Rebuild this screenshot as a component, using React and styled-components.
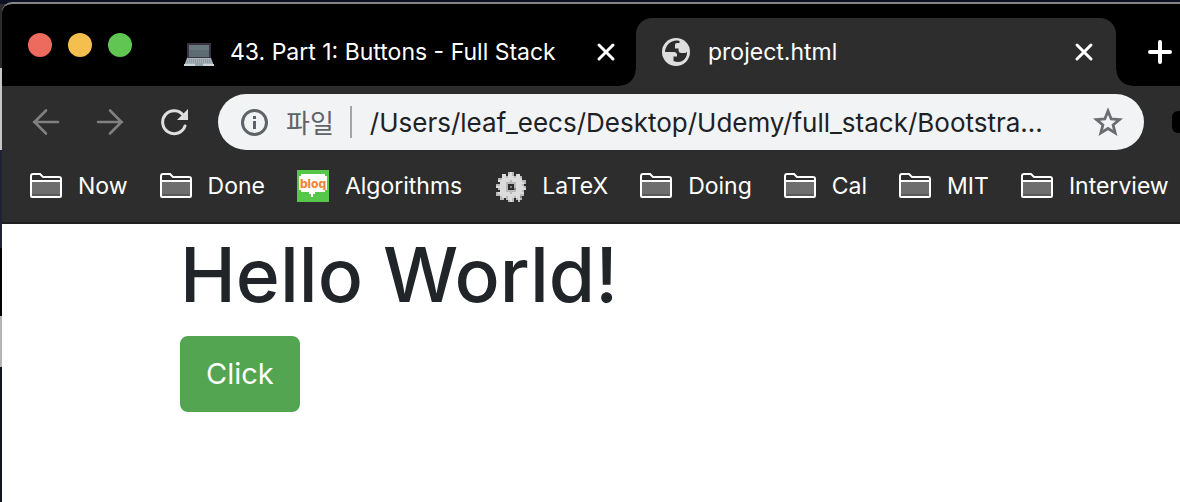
import React from "react";
import styled, { createGlobalStyle } from "styled-components";

const GlobalStyle = createGlobalStyle`
  *, *::before, *::after { box-sizing: border-box; }
  body {
    margin: 0;
    overflow: hidden;
    font-family: Inter, "Liberation Sans", "Noto Sans CJK KR", sans-serif;
  }
`;

const Desktop = styled.div`
  display: flex;
  min-height: 100vh;
  padding: 2px 0 0 2px;
  background: linear-gradient(
    #0c1020 0 4px, #2b2b2b 4px 68px, #c6c6c6 68px 150px, #1d2332 150px 248px,
    #020306 248px 316px, #b4b4b4 316px 367px, #12161c 367px
  );
`;

const Window = styled.div`
  flex: 1;
  min-width: 0;
  display: flex;
  flex-direction: column;
  overflow: hidden;
  background: #fff;
  border-top: 2px solid #858585;
  border-top-left-radius: 10px;
`;

const TabStrip = styled.header`
  display: flex;
  align-items: stretch;
  height: 82px;
  padding: 14px 8px 0 26px;
  background: #000;
`;

const Lights = styled.div`
  display: flex;
  align-items: center;
  gap: 16px;
  padding-bottom: 14px;
  margin-right: 26px;
`;

const Light = styled.button`
  width: 24px;
  height: 24px;
  padding: 0;
  border: 0;
  border-radius: 50%;
  background: ${(p) => p.$color};
`;

const Tab = styled.div`
  position: relative;
  flex: 0 1 480px;
  min-width: 0;
  display: flex;
  align-items: center;
  gap: 16px;
  margin-right: ${(p) => (p.$active ? "0" : "-2px")};
  padding: 0 22px 0 26px;
  border-radius: 16px 16px 0 0;
  background: ${(p) => (p.$active ? "#2d2d2d" : "transparent")};
  color: #fff;

  &::before,
  &::after {
    content: "";
    display: ${(p) => (p.$active ? "block" : "none")};
    position: absolute;
    bottom: 0;
    width: 16px;
    height: 16px;
  }
  &::before {
    right: 100%;
    background: radial-gradient(circle at 0 0, #000 15px, #2d2d2d 16px);
  }
  &::after {
    left: 100%;
    background: radial-gradient(circle at 100% 0, #000 15px, #2d2d2d 16px);
  }
`;

const TabTitle = styled.span`
  flex: 1;
  min-width: 0;
  overflow: hidden;
  white-space: nowrap;
  font-size: 23px;
  line-height: 32px;
`;

const IconButton = styled.button`
  flex: none;
  display: flex;
  align-items: center;
  justify-content: center;
  width: ${(p) => p.$size}px;
  padding: 0;
  border: 0;
  background: none;
  color: ${(p) => p.$color || "#fff"};
`;

const NewTab = styled(IconButton)`
  margin-left: 32px;
`;

const Chrome = styled.div`
  background: #2d2d2d;
  border-bottom: 2px solid #1f1f1f;
`;

const Toolbar = styled.div`
  display: flex;
  align-items: center;
  padding: 8px 0 8px 30px;
`;

const NavButtons = styled.nav`
  display: flex;
  gap: 36px;
  margin-right: 30px;
`;

const Omnibox = styled.div`
  flex: 1;
  min-width: 0;
  display: flex;
  align-items: center;
  height: 56px;
  padding: 0 20px 0 22px;
  border-radius: 28px;
  background: #f1f3f5;
`;

const Scheme = styled.label`
  margin-left: 18px;
  padding-right: 16px;
  border-right: 2px solid #a3a5a8;
  color: #5f6368;
  font-family: "Noto Sans CJK KR", sans-serif;
  font-size: 26px;
  line-height: 32px;
  white-space: nowrap;
`;

const Address = styled.input`
  flex: 1;
  min-width: 0;
  margin: 0 16px 0 18px;
  padding: 2px 0 0;
  border: 0;
  outline: 0;
  background: none;
  color: #202124;
  font-family: inherit;
  font-size: 26px;
  line-height: 40px;
`;

const Extension = styled.button`
  flex: none;
  width: 8px;
  height: 22px;
  margin-left: 28px;
  padding: 0;
  border: 0;
  border-radius: 6px 0 0 6px;
  background: #000;
`;

const Bookmarks = styled.nav`
  display: flex;
  align-items: center;
  gap: 32px;
  height: 64px;
  padding: 0 0 8px 28px;
`;

const Bookmark = styled.a`
  flex: none;
  display: flex;
  align-items: center;
  gap: 16px;
  color: #fff;
  font-size: 23px;
  line-height: 32px;
  text-decoration: none;
  white-space: nowrap;
`;

const Page = styled.main`
  padding: 2px 178px;
`;

const Heading = styled.h1`
  margin: 0 0 12px;
  color: #212529;
  font-size: 75px;
  font-weight: 500;
  line-height: 98px;
  white-space: nowrap;
`;

const ClickButton = styled.button`
  padding: 12px 24px;
  border: 2px solid #53a551;
  border-radius: 8px;
  background: #53a551;
  color: #fff;
  font-family: inherit;
  font-size: 29px;
  line-height: 48px;
`;

const Laptop = () => (
  <svg width="30" height="30" viewBox="0 0 30 30" aria-hidden="true">
    <path d="M3 6h24v16H3z" fill="#39343f" />
    <path d="M5 8h20v12H5z" fill="#5d6c73" />
    <path d="M5 8h20v5H5z" fill="#68777e" />
    <path d="M3 21h24l3 8H0z" fill="#aab5bb" />
    <path d="M4 22h22l1 4H3z" fill="#8f9ba2" />
    <path d="M4 23h22M4 25h22" stroke="#bcc5ca" strokeDasharray="1 1" />
    <path d="M0 27h30v2H0z" fill="#cbd5da" />
    <path d="M11 26h8v3h-8z" fill="#93a3ab" />
  </svg>
);

const Globe = () => (
  <svg width="30" height="30" viewBox="0 0 30 30" aria-hidden="true">
    <circle cx="14" cy="15" r="14" fill="#dedede" />
    <path
      d="M17.500 4C10 2 3.500 7.500 3 15h8.500c2.500 0 3.500 1 3.500 3v1.500h-3.500v4.500c7.500 3.500 14-2 13.500-9.500-.5 1-1.500 1.500-3 1.500h-2.500c-2 0-3-1-3-3v-1.500h-3.500v-3.500c0-1.200.8-2 2-2h2.500z"
      fill="#2d2d2d"
    />
  </svg>
);

const Cross = () => (
  <svg width="20" height="20" viewBox="0 0 20 20" aria-hidden="true">
    <path d="M3 3l14 14M17 3L3 17" stroke="currentColor" strokeWidth="3" strokeLinecap="round" />
  </svg>
);

const Plus = () => (
  <svg width="24" height="24" viewBox="0 0 24 24" aria-hidden="true">
    <path d="M12 2v20M2 12h20" stroke="currentColor" strokeWidth="4" strokeLinecap="round" />
  </svg>
);

const Arrow = ({ forward }) => (
  <svg width="28" height="28" viewBox="0 0 28 28" aria-hidden="true">
    <path
      d={forward ? "M2 14h24M14 2.500L25.500 14 14 25.500" : "M26 14H2M14 2.500L2.500 14 14 25.500"}
      fill="none" stroke="currentColor" strokeWidth="2.600" strokeLinecap="round"
    />
  </svg>
);

const Reload = () => (
  <svg width="28" height="28" viewBox="0 0 28 28" aria-hidden="true">
    <path d="M23.500 7.500A11.500 11.500 0 1 0 25 18" fill="none" stroke="currentColor" strokeWidth="3" strokeLinecap="round" />
    <path d="M28 1v11H17z" fill="currentColor" />
  </svg>
);

const Info = () => (
  <svg width="28" height="28" viewBox="0 0 28 28" aria-hidden="true">
    <circle cx="14.500" cy="14.500" r="12" fill="none" stroke="#5f6368" strokeWidth="3" />
    <path d="M13 8h3v3h-3zM13 13h3v8h-3z" fill="#5f6368" />
  </svg>
);

const Star = () => (
  <svg width="32" height="32" viewBox="0 0 32 32" aria-hidden="true">
    <path
      d="M16 5l3.200 8 8.300.6-6.400 5.300 2.100 8.100-7.200-4.500-7.200 4.500 2.100-8.100-6.400-5.300 8.300-.6z"
      fill="none" stroke="currentColor" strokeWidth="2.800"
    />
  </svg>
);

const Folder = () => (
  <svg width="32" height="26" viewBox="0 0 32 26" aria-hidden="true">
    <path d="M2 9h28v14H2z" fill="#6e6e6e" />
    <path d="M2 21h28v2H2z" fill="#5a5a5a" />
    <path
      d="M1 8V3q0-2 2-2h7l3 3h16q2 0 2 2v17q0 1-1 1H2q-1 0-1-1V8h30"
      fill="none" stroke="#fff" strokeWidth="2"
    />
  </svg>
);

const Blog = () => (
  <svg width="32" height="32" viewBox="0 0 32 32" aria-hidden="true">
    <path d="M0 0h32v32H0z" fill="#56c74b" />
    <path d="M4 4h24v2h2v14h-2v2H18v2h-2v3h-2v-3h-2v-2H4v-2H2V6h2z" fill="#fff" />
    <text x="16" y="18" textAnchor="middle" fontFamily="Inter, sans-serif" fontSize="12" fontWeight="800" fill="#ef8637">
      bloq
    </text>
  </svg>
);

// One character per 2px cell: a = light, b = mid, c = shadow, "." = empty.
const GEAR = [
  "......bab......",
  "...aa.aab.aa...",
  "...aabaaabaab..",
  ".bbaaaaaaaaaa..",
  ".aaaaaabaaaaabb",
  "..aaabbbbbaaaab",
  "bbaaab...baaab.",
  "aaaaab.c.baaaab",
  ".baaab...caaaaa",
  "..aaabbbbbaaab.",
  "baaaaaabaaaaaa.",
  "bbaaaaaaaaaabb.",
  "..baabaaabaac..",
  "..bb.baab.bab..",
  "......bab..b...",
];
const GEAR_FILL = { a: "#dcdcdc", b: "#b9b9b9", c: "#858585" };

const Gear = () => (
  <svg width="32" height="32" viewBox="0 0 32 32" shapeRendering="crispEdges" aria-hidden="true">
    {GEAR.flatMap((row, y) =>
      [...row].map((cell, x) =>
        cell === "." ? null : (
          <rect key={`${x}-${y}`} x={x * 2 + 2} y={y * 2 + 2} width="2" height="2" fill={GEAR_FILL[cell]} />
        )
      )
    )}
  </svg>
);

const BOOKMARKS = [
  ["Now", Folder],
  ["Done", Folder],
  ["Algorithms", Blog],
  ["LaTeX", Gear],
  ["Doing", Folder],
  ["Cal", Folder],
  ["MIT", Folder],
  ["Interview", Folder],
];

export default function App() {
  return (
    <>
      <GlobalStyle />
      <Desktop>
        <Window>
          <TabStrip>
            <Lights>
              <Light $color="#ec6a5e" aria-label="Close window" />
              <Light $color="#f5bf4f" aria-label="Minimize window" />
              <Light $color="#61c554" aria-label="Zoom window" />
            </Lights>
            <Tab>
              <Laptop />
              <TabTitle>43. Part 1: Buttons - Full Stack</TabTitle>
              <IconButton $size={20} aria-label="Close tab"><Cross /></IconButton>
            </Tab>
            <Tab $active>
              <Globe />
              <TabTitle>project.html</TabTitle>
              <IconButton $size={20} aria-label="Close tab"><Cross /></IconButton>
            </Tab>
            <NewTab $size={24} aria-label="New tab"><Plus /></NewTab>
          </TabStrip>
          <Chrome>
            <Toolbar>
              <NavButtons>
                <IconButton $size={28} $color="#808080" aria-label="Back"><Arrow /></IconButton>
                <IconButton $size={28} $color="#808080" aria-label="Forward"><Arrow forward /></IconButton>
                <IconButton $size={28} $color="#dedede" aria-label="Reload"><Reload /></IconButton>
              </NavButtons>
              <Omnibox>
                <Info />
                <Scheme htmlFor="address">파일</Scheme>
                <Address
                  id="address"
                  type="text"
                  spellCheck={false}
                  defaultValue="/Users/leaf_eecs/Desktop/Udemy/full_stack/Bootstra..."
                />
                <IconButton $size={32} $color="#6b6d70" aria-label="Bookmark this page"><Star /></IconButton>
              </Omnibox>
              <Extension aria-label="Extension" />
            </Toolbar>
            <Bookmarks>
              {BOOKMARKS.map(([name, Icon]) => (
                <Bookmark key={name} href="#">
                  <Icon />
                  {name}
                </Bookmark>
              ))}
            </Bookmarks>
          </Chrome>
          <Page>
            <Heading>Hello World!</Heading>
            <ClickButton>Click</ClickButton>
          </Page>
        </Window>
      </Desktop>
    </>
  );
}
